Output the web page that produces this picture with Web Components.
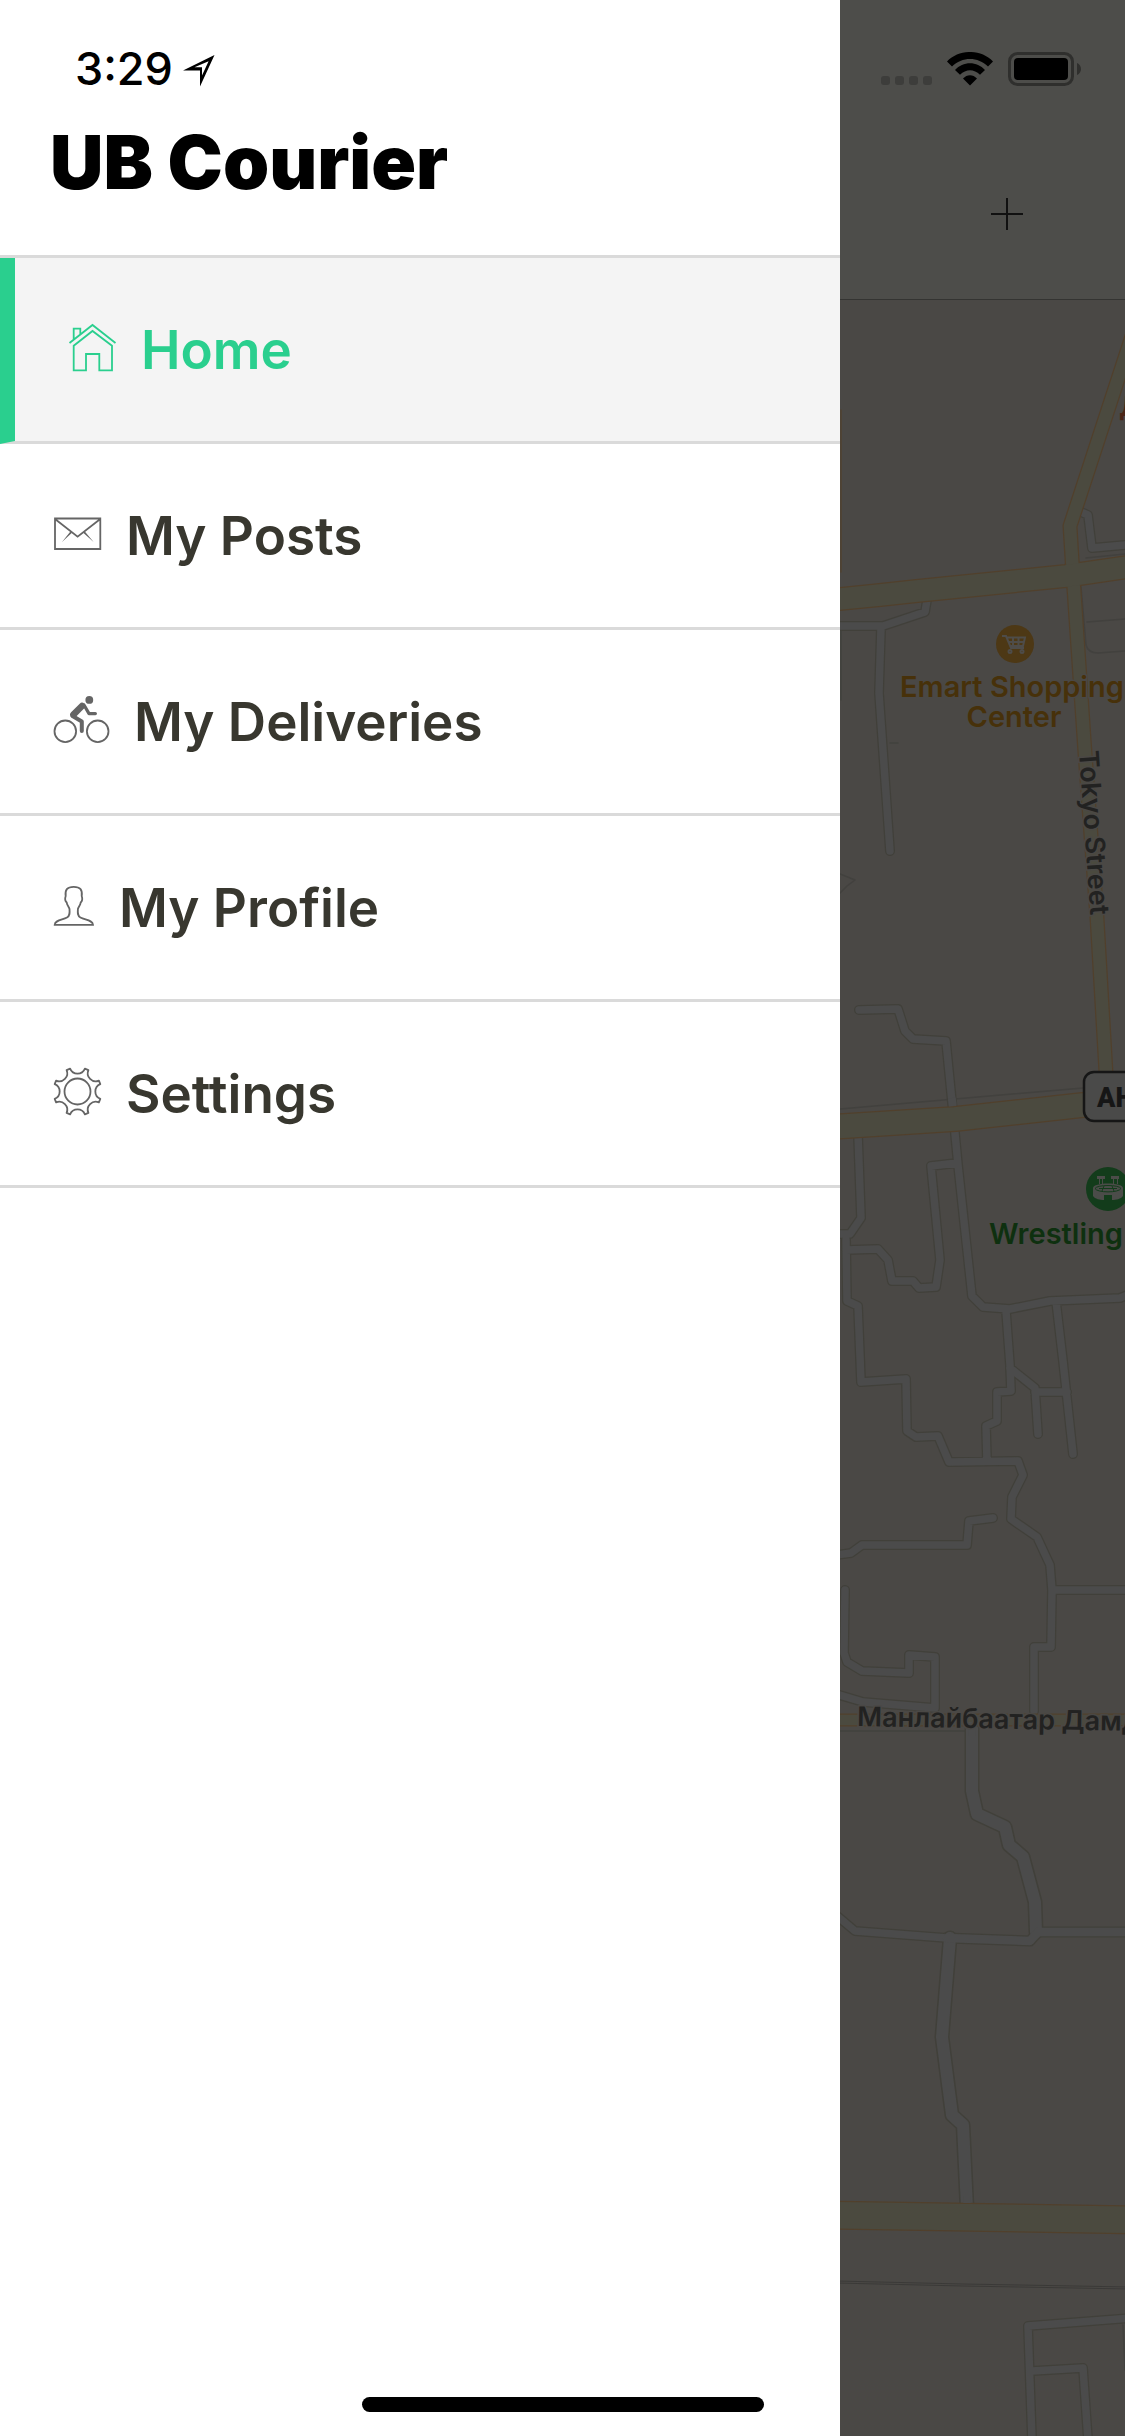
<!DOCTYPE html>
<html lang="en">
<head>
<meta charset="utf-8">
<meta name="viewport" content="width=device-width, initial-scale=1">
<title>UB Courier</title>
<style>
  html, body { margin: 0; min-height: 100%; background: #fff; }
  body { font-family: Inter, "Liberation Sans", sans-serif; }
</style>
</head>
<body>
<courier-app>
  <side-drawer slot="drawer" heading="UB Courier" time="3:29">
    <menu-item icon="home" active>Home</menu-item>
    <menu-item icon="mail">My Posts</menu-item>
    <menu-item icon="bike">My Deliveries</menu-item>
    <menu-item icon="person">My Profile</menu-item>
    <menu-item icon="gear">Settings</menu-item>
  </side-drawer>
  <top-bar slot="content"></top-bar>
  <city-map slot="content"></city-map>
</courier-app>

<script>
const define = (name, html, setup) => {
  const template = document.createElement('template');
  template.innerHTML = html;
  customElements.define(name, class extends HTMLElement {
    constructor() {
      super();
      this.attachShadow({ mode: 'open' }).append(template.content.cloneNode(true));
    }
    connectedCallback() { if (setup) setup(this, this.shadowRoot); }
  });
};

/* Page shell: drawer beside the dimmed content, home indicator on top */
define('courier-app', `
  <style>
    :host { display: grid; grid-template-columns: 56fr 19fr; min-height: 100vh; position: relative; overflow: hidden; }
    aside { background: #fff; min-width: 0; display: flex; }
    main { background: #4a4845; min-width: 0; display: flex; flex-direction: column; overflow: hidden; }
    .indicator { position: absolute; left: 0; right: 0; bottom: 24px; margin: 0 auto; width: 402px; height: 15px; border-radius: 8px; background: #000; }
  </style>
  <aside><slot name="drawer"></slot></aside>
  <main><slot name="content"></slot></main>
  <div class="indicator"></div>
`);

define('side-drawer', `
  <style>
    :host { display: flex; flex-direction: column; flex: 1; min-width: 0; color: #000; }
    .status { display: flex; align-items: center; gap: 10px; height: 50px; padding: 44px 0 34px 75px; font-size: 45px; line-height: 50px; font-weight: 500; }
    svg { width: 32px; height: 32px; display: block; margin-top: 4px; }
    h1 { margin: 0; padding: 0 50px 59px; font-size: 74px; line-height: 68px; font-weight: 900; white-space: nowrap; }
    nav { border-top: 3px solid #dadada; }
  </style>
  <div class="status">
    <time></time>
    <svg viewBox="0 0 32 32" aria-hidden="true"><path fill="#000" fill-rule="evenodd" d="M0 15.5 31.5 0 17 31.5V15.5ZM11.5 12.2H19V20.5L25.6 6.2Z"/></svg>
  </div>
  <h1></h1>
  <nav><slot></slot></nav>
`, (host, root) => {
  root.querySelector('time').textContent = host.getAttribute('time');
  root.querySelector('h1').textContent = host.getAttribute('heading');
});

const icons = {
  home: [47, '<path d="M.5 19 23.5 1 46.5 19M4.7 15.5V4.7H11.3V10M4.7 46.3V21.7L23.5 7 43 21.7V46.3H30.3V30H17V46.3Z"/>'],
  mail: [47, '<path d="M1 8.5H46.3V39H1ZM1 9 23.6 26.6 46.3 9"/><path fill="currentColor" stroke="none" d="M16.4 21.4 18 22.8 8 32ZM30.8 21.4 29.2 22.8 39.6 32Z"/>'],
  bike: [55, '<circle cx="11.3" cy="35.3" r="10.8"/><circle cx="43.7" cy="35.3" r="10.8"/><circle cx="35.3" cy="3.9" r="3.9" fill="currentColor" stroke="none"/><g stroke-linecap="round" stroke-linejoin="round"><path stroke-width="6.5" d="M19.4 18.6 28 10"/><path stroke-width="3.2" d="M30 9 35 17.6H41.4"/><path stroke-width="4" d="M18.5 20 27.8 25.5V35"/></g>'],
  person: [40, '<path d="M.7 42.8C1 38 8 38 13 35.5 16 34 15.8 31 15.5 27 15 24.5 13 23.5 12.7 20.5 11 19 11 16 11.7 14 10.8 8 13 4.8 19.7 4.8 26.4 4.8 28.6 8 27.7 14 28.4 16 28.4 19 26.7 20.5 26.4 23.5 24.4 24.5 23.9 27 23.6 31 23.4 34 26.4 35.5 31.4 38 38.7 38 39 42.8Z"/>'],
  gear: [47, '<circle cx="23.5" cy="23.5" r="13"/><path stroke-linejoin="round" d="M30.9.7 34.4 2.1A8 8 0 0 0 44.9 12.6L46.3 16.1A8 8 0 0 0 46.3 30.9L44.9 34.4A8 8 0 0 0 34.4 44.9L30.9 46.3A8 8 0 0 0 16.1 46.3L12.6 44.9A8 8 0 0 0 2.1 34.4L.7 30.9A8 8 0 0 0 .7 16.1L2.1 12.6A8 8 0 0 0 12.6 2.1L16.1.7A8 8 0 0 0 30.9.7Z"/>']
};

define('menu-item', `
  <style>
    :host { display: block; color: #38372f; --icon: #656565; }
    a { display: flex; align-items: center; gap: 25px; height: 183px; padding: 0 54px; border-bottom: 3px solid #dadada; color: inherit; text-decoration: none; font-size: 53px; line-height: 60px; font-weight: 600; white-space: nowrap; }
    :host([active]) { color: #2acf8e; --icon: #2acf8e; }
    :host([active]) a { border-left: 15px solid #2acf8e; background: #f4f4f4; }
    svg { display: block; height: 51px; flex: none; color: var(--icon); fill: none; stroke: currentColor; stroke-width: 1.8; overflow: visible; }
  </style>
  <a href="#"><svg aria-hidden="true"></svg><span><slot></slot></span></a>
`, (host, root) => {
  const [width, shapes] = icons[host.getAttribute('icon')];
  const svg = root.querySelector('svg');
  svg.setAttribute('viewBox', `0 0 ${width} 51`);
  svg.setAttribute('width', width);
  svg.innerHTML = shapes;
  if (host.hasAttribute('active')) root.querySelector('a').setAttribute('aria-current', 'page');
});

define('top-bar', `
  <style>
    :host { display: block; background: #4d4d4a; border-bottom: 1px solid #343432; }
    .status { display: flex; justify-content: flex-end; align-items: flex-end; gap: 15px; height: 34px; padding: 52px 44px 42px 0; }
    .tools { display: flex; justify-content: flex-end; align-items: center; height: 171px; padding-right: 90px; }
    button { width: 56px; height: 56px; padding: 12px; border: 0; background: none; color: #111; }
    svg { display: block; flex: none; }
  </style>
  <div class="status">
    <svg width="51" height="34" viewBox="0 0 51 34" aria-hidden="true" fill="#3d3d3b"><rect y="24" width="9" height="9" rx="3"/><rect x="14" y="24" width="9" height="9" rx="3"/><rect x="28" y="24" width="9" height="9" rx="3"/><rect x="42" y="24" width="9" height="9" rx="3"/></svg>
    <svg width="46" height="34" viewBox="0 0 46 34" aria-label="Wi-Fi"><path d="M0 9.5C12-3.2 34-3.2 46 9.5L41 14.5C31 4.5 15 4.5 5 14.5ZM8 18C16 9 30 9 38 18L33 22.7C27 16.7 19 16.7 13 22.7ZM16 26.5C20 22 26 22 30 26.5L23 33.5Z"/></svg>
    <svg width="73" height="34" viewBox="0 0 73 34" aria-label="Battery full"><rect x="1.5" y="1.5" width="63" height="31" rx="8" fill="none" stroke="#2f2f2d" stroke-width="3"/><rect x="6" y="6" width="54" height="22" rx="4"/><path fill="#2f2f2d" d="M69 11C74.3 13 74.3 21 69 23Z"/></svg>
  </div>
  <div class="tools">
    <button type="button" aria-label="Add"><svg width="32" height="32" viewBox="0 0 32 32" stroke="currentColor" stroke-width="2"><path d="M16 0V32M0 16H32"/></svg></button>
  </div>
`);

define('city-map', `
  <style>
    :host { display: flex; flex: 1; min-height: 0; background: #4a4845; }
    svg { display: block; width: 100%; flex: 1; }
    text { font-size: 27px; font-weight: 600; paint-order: stroke; stroke: #4a4845; stroke-width: 3px; }
    .place { font-size: 29px; }
    .shield { font-family: Roboto, "Liberation Sans", sans-serif; font-weight: 900; stroke: none; }
    .lines { fill: none; stroke-linejoin: round; stroke-linecap: round; }
  </style>
  <svg viewBox="840 300 285 2136" preserveAspectRatio="xMinYMin slice" role="img" aria-label="Map">
    <defs>
      <path id="lanes" d="M1081 512 1088 515 1092 548 1125 545M927 600 925 612 883 626H838M881 628 879 693 890 851M859 1010 898 1009 905 1031 913 1039 946 1041 952 1102 958 1165 972 1296 983 1307 1010 1309 1050 1301 1120 1298 1130 1294M858 1135 861 1218 850 1234H836M846 1240 847 1301 858 1306 861 1382 906 1379 907 1431 916 1437 938 1436 949 1462 1018 1461 1023 1475 1012 1497 1011 1519 1037 1537 1050 1565 1052 1590 1051 1647H1034V1711M1052 1590H1130M846 1250 878 1249 888 1260 892 1281 913 1281 919 1288 936 1287 940 1260 931 1166 957 1163M1006 1311 1010 1365 1011 1391 997 1392V1421L986 1426 987 1461M1010 1368 1035 1388 1038 1434M1035 1392H1067M1056 1301 1063 1361 1073 1454M993 1518 969 1521 967 1545H862L851 1553 836 1555M845 1590 844 1653 847 1662 862 1671 909 1673V1655L935 1657V1707M836 1694 863 1702 935 1708M836 1915 855 1931 947 1938M1130 2318 1028 2326 1032 2440M1032 2371 1083 2368 1088 2440"/>
      <path id="streets" d="M972 1728V1791L977 1814 1005 1827 1009 1845 1023 1857 1035 1902 1036 1932M950 1938 942 2037 952 2115 963 2125 967 2208"/>
      <path id="wide" d="M947 1938 1030 1941 1038 1932H1130"/>
      <path id="avenue" d="M1135 327 1070 526 1073 575 1085 753 1097 918 1107 1090"/>
      <path id="eastwest" d="M830 600 880 595 917 591 1066 576 1135 566"/>
    </defs>
    <g class="lines">
      <g stroke="#42413e" stroke-width="1.5">
        <path d="M841 630V700M1081 587 1086 645Q1088 653 1098 653L1125 651M1087 622 1125 619M1086 558 1125 554M840 874 855 880 847 886 840 893M890 743H898M840 1109 1083 1088M840 1731H975M1123 2325 1125 2370"/>
      </g>
      <g stroke="#41403a">
        <use href="#lanes" stroke-width="10"/><use href="#streets" stroke-width="15"/><use href="#wide" stroke-width="11"/>
      </g>
      <g stroke="#4b4b4b">
        <use href="#lanes" stroke-width="7.5"/><use href="#streets" stroke-width="12"/><use href="#wide" stroke-width="8.5"/>
      </g>
      <path d="M841 410V572" stroke="#504231" stroke-width="1.5"/>
      <g stroke="#51402c">
        <use href="#avenue" stroke-width="15"/><use href="#eastwest" stroke-width="24"/>
        <path stroke-width="26" d="M830 1127 955 1119 1083 1105 1135 1102"/>
        <path stroke-width="13" d="M830 1720H1135"/>
        <path stroke-width="29" d="M830 2215 1135 2220"/>
      </g>
      <g stroke="#4b4a3f">
        <use href="#avenue" stroke-width="12.5"/><use href="#eastwest" stroke-width="21.5"/>
        <path stroke-width="23.5" d="M830 1127 955 1119 1083 1105 1135 1102"/>
        <path stroke-width="10.5" d="M830 1720H1135"/>
        <path stroke-width="26.5" d="M830 2215 1135 2220"/>
      </g>
      <path d="M952 1098 953 1106M972 1722V1736M967 2196V2203" stroke="#4b4b4b" stroke-width="7.5" stroke-linecap="butt"/>
      <path d="M836 2281 963 2284 1130 2287M836 2283 963 2286 1130 2289" stroke="#3b3a38" stroke-width="1"/>
    </g>

    <circle cx="1015" cy="644" r="19" fill="#4d3815"/>
    <g fill="none" stroke="#4e4c49" stroke-width="2">
      <path d="M1002 636H1006L1011 648H1024M1007 637.5H1025L1023 646H1010M1008 642H1024M1013 637V647M1018.5 637V647"/>
      <circle cx="1010" cy="651.5" r="1.5"/><circle cx="1022" cy="651.5" r="1.5"/>
    </g>
    <g fill="#47310a">
      <text class="place" x="900" y="697">Emart Shopping</text>
      <text class="place" x="1014" y="727" text-anchor="middle">Center</text>
    </g>
    <text x="1119" y="416" fill="#4b2416">Д</text>
    <text transform="translate(1079 751) rotate(86)" fill="#222221">Tokyo Street</text>

    <rect x="1084" y="1072" width="80" height="49" rx="10" fill="#4a4a49" stroke="#161616" stroke-width="2.5"/>
    <text class="shield" x="1097" y="1107" fill="#161616">AH</text>

    <circle cx="1108" cy="1189" r="22" fill="#133c1b"/>
    <g fill="#4b4c49">
      <path d="M1097 1176H1105V1179H1097ZM1111 1176H1119V1179H1111ZM1099 1179H1100V1184H1099ZM1102 1179H1103V1184H1102ZM1113 1179H1114V1184H1113ZM1117 1179H1118V1184H1117Z"/>
      <path d="M1093 1188C1093 1182 1123 1182 1123 1188V1196C1121 1199 1116 1200 1112 1200V1195H1104V1200C1100 1200 1095 1199 1093 1196Z"/>
    </g>
    <path d="M1095 1188.5C1097 1184.5 1119 1184.5 1121 1188.5 1119 1193 1097 1193 1095 1188.5ZM1099 1188.5H1117M1104 1186 1102 1191M1112 1186 1114 1191" fill="none" stroke="#133c1b"/>
    <text class="place" x="989" y="1244" fill="#0e300f">Wrestling</text>
    <text transform="translate(857 1726) rotate(1)" fill="#222221">Манлайбаатар Дамдинсүрэн</text>
  </svg>
`);
</script>
</body>
</html>
